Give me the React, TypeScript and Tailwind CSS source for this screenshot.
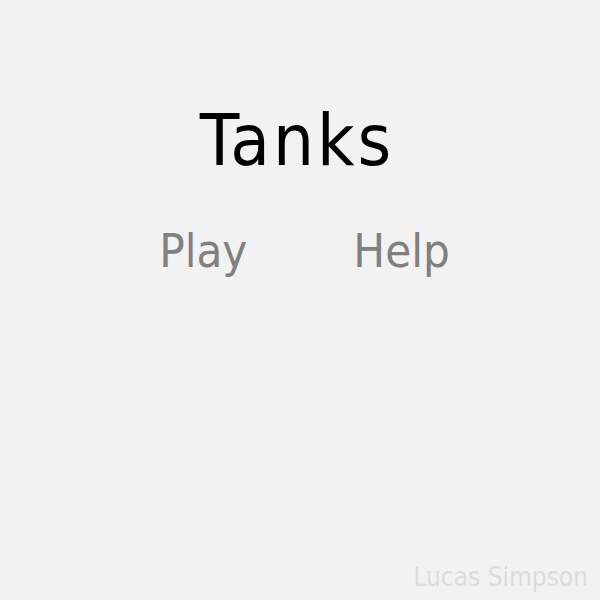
export default function App() {
  return (
    <div className="h-[600px] w-[600px] bg-[#f2f2f2] flex flex-col font-['DejaVu_Sans_Condensed','DejaVu_Sans',sans-serif] overflow-hidden">
      <h1 className="mt-[96px] ml-[-6px] text-center text-[72px] leading-[88px] tracking-[3px] text-black">Tanks</h1>
      <div className="mt-[37px] flex justify-center gap-[106px] ml-[9px] text-[47px] leading-[60px] text-[#808080]">
        <button>Play</button>
        <button>Help</button>
      </div>
      <div className="mt-auto mb-[8px] mr-[12px] text-right text-[26px] leading-[30px] text-[#dcdcdc]">Lucas Simpson</div>
    </div>
  )
}
